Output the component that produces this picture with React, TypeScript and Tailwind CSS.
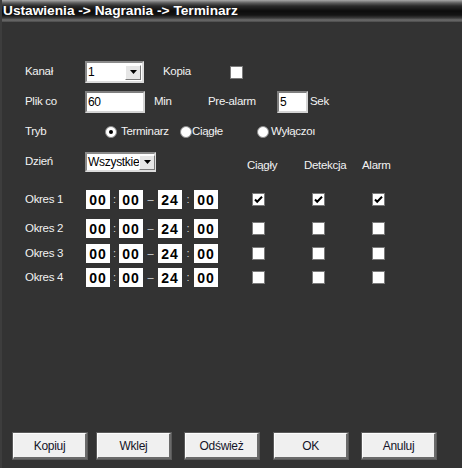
import React from "react";

const F = "font-['Liberation_Sans',Arial,sans-serif] tracking-[-0.3px]";

function Label({ children, w }: { children: React.ReactNode; w?: string }) {
  return (
    <span className={`${F} text-[11.5px] leading-none text-[#f2f2f2] whitespace-nowrap ${w ?? ""}`}>
      {children}
    </span>
  );
}

function Checkbox({ checked }: { checked?: boolean }) {
  return (
    <span className="relative inline-block w-[13px] h-[13px] bg-white border border-[#7a7a7a] shrink-0">
      {checked && (
        <svg viewBox="0 0 11 11" className="absolute left-0 top-0 w-[11px] h-[11px]">
          <path d="M2 5.5 L4.2 7.8 L9 2.8" stroke="#000" strokeWidth="2" fill="none" />
        </svg>
      )}
    </span>
  );
}

function Radio({ checked }: { checked?: boolean }) {
  return (
    <span className="relative inline-flex items-center justify-center w-[12px] h-[12px] rounded-full bg-white border border-[#8a8a8a] shrink-0">
      {checked && <span className="w-[4px] h-[4px] rounded-full bg-black" />}
    </span>
  );
}

function Arrow() {
  return (
    <span className="flex items-center justify-center w-[16px] h-[15px] bg-[#e6e6e6] border border-t-white border-l-white border-b-[#7a7a7a] border-r-[#7a7a7a] shrink-0">
      <svg viewBox="0 0 7 4" className="w-[7px] h-[4px]">
        <path d="M0 0 H7 L3.5 4 Z" fill="#000" />
      </svg>
    </span>
  );
}

function Select({ value, w, h }: { value: string; w: string; h: string }) {
  return (
    <span
      className={`${w} ${h} flex items-center justify-between bg-white border-2 border-t-[#8a8a8a] border-l-[#8a8a8a] border-b-[#dcdcdc] border-r-[#dcdcdc] pl-[1px] pr-[1px] shrink-0`}
    >
      <span className={`${F} text-[12px] leading-none text-black`}>{value}</span>
      <Arrow />
    </span>
  );
}

function Input({ value, w }: { value: string; w: string }) {
  return (
    <span
      className={`${w} h-[22px] flex items-center bg-white border-2 border-t-[#7f7f7f] border-l-[#7f7f7f] border-b-[#d4d4d4] border-r-[#d4d4d4] pl-[1px] shrink-0`}
    >
      <span className={`${F} text-[12px] leading-none text-black`}>{value}</span>
    </span>
  );
}

function TimeBox({ v }: { v: string }) {
  return (
    <span className="w-[24px] h-[19px] bg-white flex items-center justify-center shrink-0">
      <span className="font-['Liberation_Sans',Arial,sans-serif] font-bold text-[14px] leading-none text-black tracking-[1px]">
        {v}
      </span>
    </span>
  );
}

function Sep({ c, w }: { c: string; w: string }) {
  return (
    <span className={`${w} flex justify-center text-[#d8d8d8] font-['Liberation_Sans',Arial,sans-serif] text-[11px] leading-none shrink-0`}>
      {c}
    </span>
  );
}

function OkresRow({ n, checked, mt }: { n: number; checked?: boolean; mt: string }) {
  return (
    <div className={`flex items-center h-[19px] ${mt}`}>
      <Label w="w-[61px]">Okres {n}</Label>
      <TimeBox v="00" />
      <Sep c=":" w="w-[9px]" />
      <TimeBox v="00" />
      <Sep c="–" w="w-[15px]" />
      <TimeBox v="24" />
      <Sep c=":" w="w-[12px]" />
      <TimeBox v="00" />
      <span className="ml-[34px]">
        <Checkbox checked={checked} />
      </span>
      <span className="ml-[47px]">
        <Checkbox checked={checked} />
      </span>
      <span className="ml-[47px]">
        <Checkbox checked={checked} />
      </span>
    </div>
  );
}

function Button({ children, ml }: { children: React.ReactNode; ml: string }) {
  return (
    <span
      className={`${ml} w-[74px] h-[26px] flex items-center justify-center bg-[#f0f0f0] border border-t-[#fdfdfd] border-l-[#fdfdfd] border-b-2 border-r-2 border-b-[#6a6a6a] border-r-[#6a6a6a] shadow-[0_0_0_1px_#5a5a5a] shrink-0`}
    >
      <span className={`${F} text-[12px] leading-none text-[#141428]`}>{children}</span>
    </span>
  );
}

export default function App() {
  return (
    <div className="w-[462px] h-[468px] bg-[#333333] flex flex-col overflow-hidden border-l-2 border-l-[#3d3d3d]">
      <div className="h-[22px] -ml-[2px] w-[462px] flex items-center pl-[3px] bg-[linear-gradient(to_bottom,#a8a8a8_0px,#5c5c5c_3px,#2a2a2a_6px,#0c0c0c_11px,#141414_15px,#3a3a3a_18px,#6c6c6c_20px,#4a4a4a_22px)] shrink-0">
        <span className="font-['Liberation_Sans',Arial,sans-serif] font-bold text-[13.7px] leading-none text-white whitespace-nowrap">
          Ustawienia -&gt; Nagrania -&gt; Terminarz
        </span>
      </div>

      <div className="pl-[23px] flex flex-col">
        {/* Kanał */}
        <div className="flex items-center h-[22px] mt-[39px]">
          <Label w="w-[60px]">Kanał</Label>
          <Select value="1" w="w-[59px]" h="h-[22px]" />
          <Label w="w-[67px] ml-[19px]">Kopia</Label>
          <Checkbox />
        </div>

        {/* Plik co */}
        <div className="flex items-center h-[22px] mt-[8px]">
          <Label w="w-[60px]">Plik co</Label>
          <Input value="60" w="w-[60px]" />
          <Label w="w-[54px] ml-[9px]">Min</Label>
          <Label w="w-[69px]">Pre-alarm</Label>
          <Input value="5" w="w-[31px]" />
          <Label w="ml-[2px]">Sek</Label>
        </div>

        {/* Tryb */}
        <div className="flex items-center h-[16px] mt-[11px]">
          <Label w="w-[80px]">Tryb</Label>
          <span className="w-[75px] flex items-center">
            <Radio checked />
            <Label w="ml-[4px]">Terminarz</Label>
          </span>
          <span className="w-[77px] flex items-center">
            <Radio />
            <Label>Ciągłe</Label>
          </span>
          <span className="flex items-center">
            <Radio />
            <Label w="ml-[2px]">Wyłączoı</Label>
          </span>
        </div>

        {/* Dzień */}
        <div className="flex items-start h-[20px] mt-[12px]">
          <span className="h-[20px] flex items-center w-[60px]">
            <Label>Dzień</Label>
          </span>
          <Select value="Wszystkie" w="w-[71px]" h="h-[20px]" />
          <span className="flex pt-[8px] ml-[91px]">
            <Label w="w-[57px]">Ciągły</Label>
            <Label w="w-[58px]">Detekcja</Label>
            <Label>Alarm</Label>
          </span>
        </div>

        <OkresRow n={1} checked mt="mt-[18px]" />
        <OkresRow n={2} mt="mt-[10px]" />
        <OkresRow n={3} mt="mt-[6px]" />
        <OkresRow n={4} mt="mt-[5px]" />
      </div>

      <div className="flex mt-[146px] pl-[11px]">
        <Button ml="ml-0">Kopiuj</Button>
        <Button ml="ml-[10px]">Wklej</Button>
        <Button ml="ml-[14px]">Odśwież</Button>
        <Button ml="ml-[15px]">OK</Button>
        <Button ml="ml-[14px]">Anuluj</Button>
      </div>
    </div>
  );
}
